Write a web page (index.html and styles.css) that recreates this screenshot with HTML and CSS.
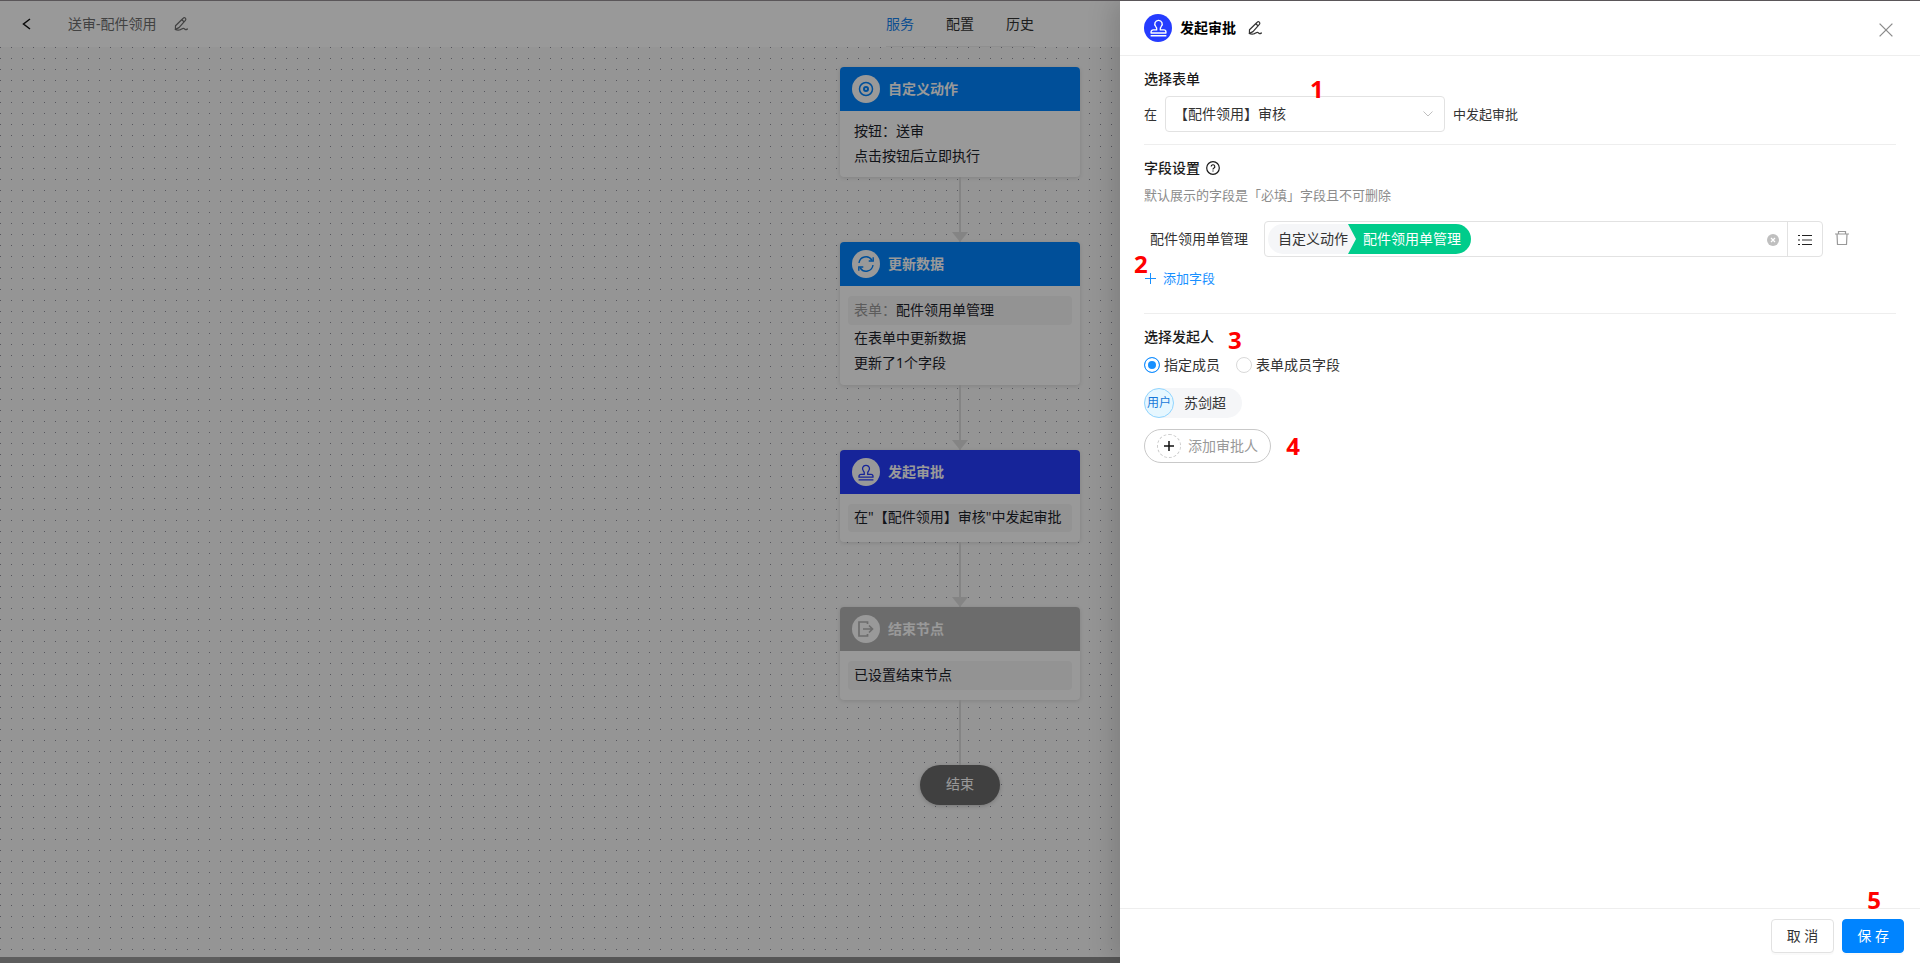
FILE: index.html
```html
<!DOCTYPE html>
<html lang="zh-CN">
<head>
<meta charset="utf-8">
<title>送审-配件领用</title>
<link rel="stylesheet" href="styles.css">
</head>
<body>
<svg class="sprite" aria-hidden="true">
  <symbol id="i-edit" viewBox="0 0 14 14"><path d="M9.200 1.200a1.500 1.500 0 0 1 2.200 2.100L5 10.600 1.400 12.400 1.500 8.800zM7.800 2.700l2.200 2M1.200 12.400q2 1 4.200.600c2-.4 2.600-1.700 4-1.700 1.200 0 1 1.300 2.200 1.300.8 0 1.300-.3 1.900-.6" fill="none" stroke="currentColor" stroke-width="1.200" stroke-linejoin="round" stroke-linecap="round"/></symbol>
  <symbol id="i-stamp" viewBox="0 0 16 16"><path d="M6.300 9.800c.2-1.500 0-2.500-.9-3.300A3.400 3.400 0 0 1 8 .8a3.400 3.400 0 0 1 2.600 5.700c-.9.800-1.100 1.800-.9 3.300H13a2 2 0 0 1 2 2v.9H1v-.9a2 2 0 0 1 2-2zM.6 15.300h14.800" fill="none" stroke="currentColor" stroke-width="1.300" stroke-linejoin="round"/></symbol>
</svg>

<div class="app">
  <header class="topbar">
    <div class="topbar-title">
      <button class="icon-btn back" aria-label="返回"><svg width="9" height="12" viewBox="0 0 9 12"><path d="M8 1 1.500 6 8 11" fill="none" stroke="currentColor" stroke-width="1.500"/></svg></button>
      <span>送审-配件领用</span>
      <button class="icon-btn rename" aria-label="编辑名称"><svg width="14" height="14"><use href="#i-edit"/></svg></button>
    </div>
    <nav class="tabs">
      <a class="tab active" href="#service">服务</a>
      <a class="tab" href="#config">配置</a>
      <a class="tab" href="#history">历史</a>
    </nav>
  </header>

  <main class="canvas">
    <article class="node">
      <h2 class="node-head"><span class="node-icon"><svg width="16" height="16" viewBox="0 0 16 16" fill="none" stroke="currentColor"><circle cx="8" cy="8" r="6.500" stroke-width="1.500"/><circle cx="8" cy="8" r="2" stroke-width="2"/></svg></span>自定义动作</h2>
      <div class="node-body plain"><p>按钮：送审</p><p>点击按钮后立即执行</p></div>
    </article>
    <div class="link arrow"></div>
    <article class="node">
      <h2 class="node-head"><span class="node-icon"><svg width="18" height="18" viewBox="0 0 18 18" fill="none" stroke="currentColor" stroke-width="1.400"><path d="M2 8A7 7 0 0 1 14.800 5M16 10A7 7 0 0 1 3.200 13M16.200 2.200V6h-4.500M1.800 15.800V12h4.500"/></svg></span>更新数据</h2>
      <div class="node-body">
        <p class="field"><span class="muted">表单：</span>配件领用单管理</p>
        <p>在表单中更新数据</p><p>更新了1个字段</p>
      </div>
    </article>
    <div class="link arrow"></div>
    <article class="node approve">
      <h2 class="node-head"><span class="node-icon"><svg width="16" height="17"><use href="#i-stamp"/></svg></span>发起审批</h2>
      <div class="node-body single"><p class="field">在"【配件领用】审核"中发起审批</p></div>
    </article>
    <div class="link arrow"></div>
    <article class="node finish">
      <h2 class="node-head"><span class="node-icon"><svg width="16" height="16" viewBox="0 0 16 16" fill="none" stroke="currentColor" stroke-width="1.700"><path d="M9.500 3V1H1v14h8.500v-2M5 8h9M11 4.500 14.500 8 11 11.500"/></svg></span>结束节点</h2>
      <div class="node-body single"><p class="field">已设置结束节点</p></div>
    </article>
    <div class="link"></div>
    <div class="end">结束</div>
  </main>
  <div class="scrollbar"><div class="thumb"></div></div>
  <div class="mask"></div>

  <aside class="drawer" aria-label="发起审批">
    <header class="drawer-head">
      <span class="badge"><svg width="17" height="18"><use href="#i-stamp"/></svg></span>
      <h1>发起审批</h1>
      <button class="icon-btn" aria-label="编辑名称"><svg width="14" height="14"><use href="#i-edit"/></svg></button>
      <button class="icon-btn close" aria-label="关闭"><svg width="14" height="14" viewBox="0 0 14 14"><path d="m.6.6 12.800 12.800M13.400.6.6 13.400" stroke="currentColor" stroke-width="1.300"/></svg></button>
    </header>

    <form class="drawer-body">
      <section class="block">
        <h2>选择表单</h2>
        <div class="form-row">
          <label for="form">在</label>
          <div class="select-wrap">
            <select id="form"><option>【配件领用】审核</option></select>
            <svg class="caret" width="10" height="6" viewBox="0 0 10 6"><path d="m.5.500 4.500 4.500L9.500.500" fill="none" stroke="currentColor"/></svg>
            <span class="step step-1">1</span>
          </div>
          <span>中发起审批</span>
        </div>
      </section>

      <section class="block fields">
        <h2>字段设置 <svg width="14" height="14" viewBox="0 0 14 14" fill="none" stroke="currentColor"><circle cx="7" cy="7" r="6.300" stroke-width="1.200"/><path d="M5.200 5.600A1.800 1.800 0 1 1 7.700 7.200Q7 7.500 7 8.400M7 9.400v1.200" stroke-width="1.200"/></svg></h2>
        <p class="hint">默认展示的字段是「必填」字段且不可删除</p>
        <div class="field-row">
          <span class="field-label">配件领用单管理</span>
          <div class="value-box">
            <span class="tag-source">自定义动作</span><span class="tag-value">配件领用单管理</span>
            <button type="button" class="icon-btn clear" aria-label="清除"><svg width="12" height="12" viewBox="0 0 12 12"><circle cx="6" cy="6" r="6" fill="#bfbfbf"/><path d="m4 4 4 4M8 4 4 8" stroke="#fff" stroke-width="1.200"/></svg></button>
            <button type="button" class="icon-btn list" aria-label="选择字段"><svg width="14" height="12" viewBox="0 0 14 12"><path d="M4 1.500h10M4 10.500h10M0 1.500h2M0 6h2M0 10.500h2" stroke="#222" stroke-width="1.200"/><path d="M4 6h10" stroke="#777" stroke-width="1.500"/></svg></button>
          </div>
          <button type="button" class="icon-btn trash" aria-label="删除"><svg width="14" height="16" viewBox="0 0 14 16" fill="none" stroke="currentColor" stroke-width="1.200"><path d="M0 4h14M3.500 4V1.500h7V4M2 4l.5 10.500h9L12 4"/></svg></button>
        </div>
        <button type="button" class="add-field"><svg width="11" height="11" viewBox="0 0 11 11"><path d="M5.500 0v11M0 5.500h11" stroke="currentColor" stroke-width="1"/></svg>添加字段<span class="step step-2">2</span></button>
      </section>

      <section class="block starter">
        <h2>选择发起人<span class="step step-3">3</span></h2>
        <div class="radios">
          <label><input type="radio" name="who" checked>指定成员</label>
          <label><input type="radio" name="who">表单成员字段</label>
        </div>
        <div class="user"><span class="avatar">用户</span>苏剑超</div>
        <button type="button" class="add-user"><span class="plus"><svg width="10" height="10" viewBox="0 0 10 10"><path d="M5 0v10M0 5h10" stroke="#111" stroke-width="1.500"/></svg></span>添加审批人<span class="step step-4">4</span></button>
      </section>
    </form>

    <footer class="drawer-foot">
      <button class="btn">取 消</button>
      <button class="btn primary">保 存<span class="step step-5">5</span></button>
    </footer>
  </aside>
</div>
</body>
</html>
```

FILE: styles.css
```css
* { box-sizing: border-box; }
body, h1, h2, p { margin: 0; }
body { font: 14px/22px "Noto Sans", "Noto Sans CJK SC", sans-serif; color: #333; }
button, select { font: inherit; color: inherit; }
svg { display: block; flex: none; }
.sprite { position: absolute; width: 0; height: 0; }

.app { position: relative; display: flex; flex-direction: column; height: 100vh; border-top: 1px solid #5a5659; overflow: hidden; }
.icon-btn { display: inline-flex; padding: 0; border: 0; background: none; }

/* Top bar */
.topbar { display: grid; grid-template-columns: 1fr auto 1fr; height: 46px; background: #fff; }
.topbar-title { display: flex; align-items: center; padding-left: 22px; color: #6e6e6e; }
.back { margin-right: 37px; color: #111; }
.rename { margin-left: 17px; }
.tabs { display: flex; gap: 32px; align-items: center; border-bottom: 1px solid #eee; }
.tab { color: #333; text-decoration: none; }
.tab.active { color: #1683f0; }

/* Flow canvas */
.canvas {
  flex: 1; min-height: 0; overflow: hidden;
  display: flex; flex-direction: column; align-items: center; padding-top: 20px;
  background: conic-gradient(at 1px 1px, transparent 75%, #8f909c 0) 0 0 / 11px 11px, #f8f8f8;
}
.node { flex: none; width: 240px; border-radius: 4px; background: #fff; box-shadow: 0 1px 4px rgba(0, 0, 0, .12); }
.node-head { display: flex; align-items: center; gap: 8px; height: 44px; padding: 0 12px; border-radius: 4px 4px 0 0; background: #0084ff; color: #fff; font-size: 14px; }
.node-icon { display: grid; place-items: center; width: 28px; height: 28px; border-radius: 50%; background: #fff; color: #0084ff; }
.approve .node-head { background: #253cff; }
.approve .node-icon { color: #253cff; }
.finish .node-head { background: #b5b5b5; }
.finish .node-icon { color: #b5b5b5; }
.node-body { padding: 10px 8px; line-height: 25px; color: #1c222a; }
.node-body.plain { padding: 7px 8px 9px; }
.node-body p { padding: 0 6px; white-space: nowrap; }
.node-body .field { padding-bottom: 2px; border-radius: 4px; background: #f5f5f5; line-height: 27px; }
.approve .node-body .field { line-height: 26px; }
.muted { color: #999; }
.link { flex: none; position: relative; width: 2px; height: 65px; background: #dcdcdc; }
.arrow::after { content: ""; position: absolute; bottom: 0; left: -7px; border: 8px solid transparent; border-top: 10px solid #dcdcdc; border-bottom: 0; }
.end { flex: none; width: 80px; height: 40px; border-radius: 20px; background: #6c6c6c; color: #fff; text-align: center; line-height: 38px; box-shadow: 0 1px 4px rgba(0, 0, 0, .2); }
.scrollbar { height: 6px; background: #8e8e8e; }
.thumb { width: 220px; height: 6px; background: #9b9b9b; }

.mask { position: absolute; inset: 0; background: rgba(0, 0, 0, .4); }

/* Drawer */
.drawer { position: absolute; top: 0; right: 0; bottom: 0; display: flex; flex-direction: column; width: 800px; max-width: 100%; background: #fff; box-shadow: -8px 0 24px rgba(0, 0, 0, .15); }
.drawer-head { display: flex; align-items: center; height: 55px; padding: 0 27px 0 24px; border-bottom: 1px solid #eee; color: #333; }
.badge { display: grid; place-items: center; width: 28px; height: 28px; border-radius: 50%; background: #253cff; color: #fff; }
.drawer-head h1 { margin: 0 12px 0 8px; font-size: 14px; color: #000; }
.close { margin-left: auto; padding-top: 4px; color: #8c8c8c; }

.drawer-body { flex: 1; min-height: 0; padding: 0 24px; }
.block { padding: 12px 0; border-bottom: 1px solid #eee; }
.block h2 { display: flex; align-items: center; gap: 6px; font-size: 14px; font-weight: 500; color: #1a1a1a; }
.form-row { display: flex; align-items: center; gap: 8px; margin-top: 6px; font-size: 13px; }
.select-wrap { position: relative; width: 280px; }
select { appearance: none; display: block; width: 100%; height: 36px; padding: 0 8px; border: 1px solid #e2e2e2; border-radius: 4px; background: #fff; font-size: 14px; }
.caret { position: absolute; right: 12px; top: 15px; color: #bfbfbf; }

.fields { padding-bottom: 24px; }
.hint { margin-top: 6px; font-size: 13px; line-height: 20px; color: #8c8c8c; }
.field-row { display: flex; align-items: center; margin-top: 16px; padding: 0 47px 0 6px; }
.field-label { width: 114px; }
.value-box { flex: 1; display: flex; align-items: center; height: 36px; padding-left: 3px; border: 1px solid #e2e2e2; border-radius: 4px; line-height: 30px; }
.tag-source { padding: 0 8px 0 10px; border-radius: 15px 0 0 15px; background: #f5f6f8; }
.tag-value { margin-left: -8px; padding: 0 10px 0 15px; border-radius: 0 15px 15px 0; background: #00cc8b; color: #fff; clip-path: polygon(0 0, 100% 0, 100% 100%, 0 100%, 8px 50%); }
.clear { margin: 2px 8px 0 auto; }
.list { align-items: center; justify-content: center; width: 35px; height: 34px; padding-top: 2px; border-left: 1px solid #e2e2e2; }
.trash { margin: 0 0 2px 12px; color: #999; }
.add-field { position: relative; display: flex; align-items: center; gap: 7px; margin-top: 10px; padding: 0 1px; border: 0; background: none; color: #1890ff; font-size: 13px; }

.starter { border-bottom: 0; }
.starter h2 { position: relative; width: max-content; }
.radios { display: flex; gap: 16px; margin-top: 6px; }
.radios label { display: flex; align-items: center; gap: 4px; }
.radios input { appearance: none; width: 16px; height: 16px; margin: 0; border: 1px solid #d9d9d9; border-radius: 50%; }
.radios input:checked { border-color: #1890ff; background: #1890ff; box-shadow: inset 0 0 0 3px #fff; }
.user { display: flex; align-items: center; gap: 10px; width: max-content; height: 30px; margin-top: 12px; padding-right: 16px; border-radius: 15px; background: #f5f6f8; }
.avatar { width: 30px; height: 30px; border: 1px solid #91d5ff; border-radius: 50%; background: #e6f7ff; color: #1677d9; font-size: 12px; line-height: 27px; text-align: center; }
.add-user { position: relative; display: flex; align-items: center; gap: 7px; height: 34px; margin-top: 11px; padding: 0 12px; border: 1px solid #c9c9c9; border-radius: 17px; background: #fff; color: #999; }
.plus { display: grid; place-items: center; width: 24px; height: 24px; border: 1px dashed #ccc; border-radius: 50%; }

.drawer-foot { display: flex; justify-content: flex-end; gap: 8px; padding: 10px 16px; border-top: 1px solid #eee; }
.btn { position: relative; height: 34px; padding: 0 15px; border: 1px solid #e2e2e2; border-radius: 4px; background: #fff; box-shadow: 0 2px 0 rgba(0, 0, 0, .02); }
.btn.primary { padding: 0 14px; border-color: #0084ff; background: #0084ff; color: #fff; }

/* Numbered step markers */
.step { position: absolute; color: #f00; font: bold 24px/24px "Open Sans", "Noto Sans", sans-serif; }
.step-1 { left: 145px; top: -19px; }
.step-2 { left: -10px; top: -15px; }
.step-3 { left: 84px; top: 2px; }
.step-4 { right: -30px; top: 4px; }
.step-5 { right: 22px; top: -32px; }
```
